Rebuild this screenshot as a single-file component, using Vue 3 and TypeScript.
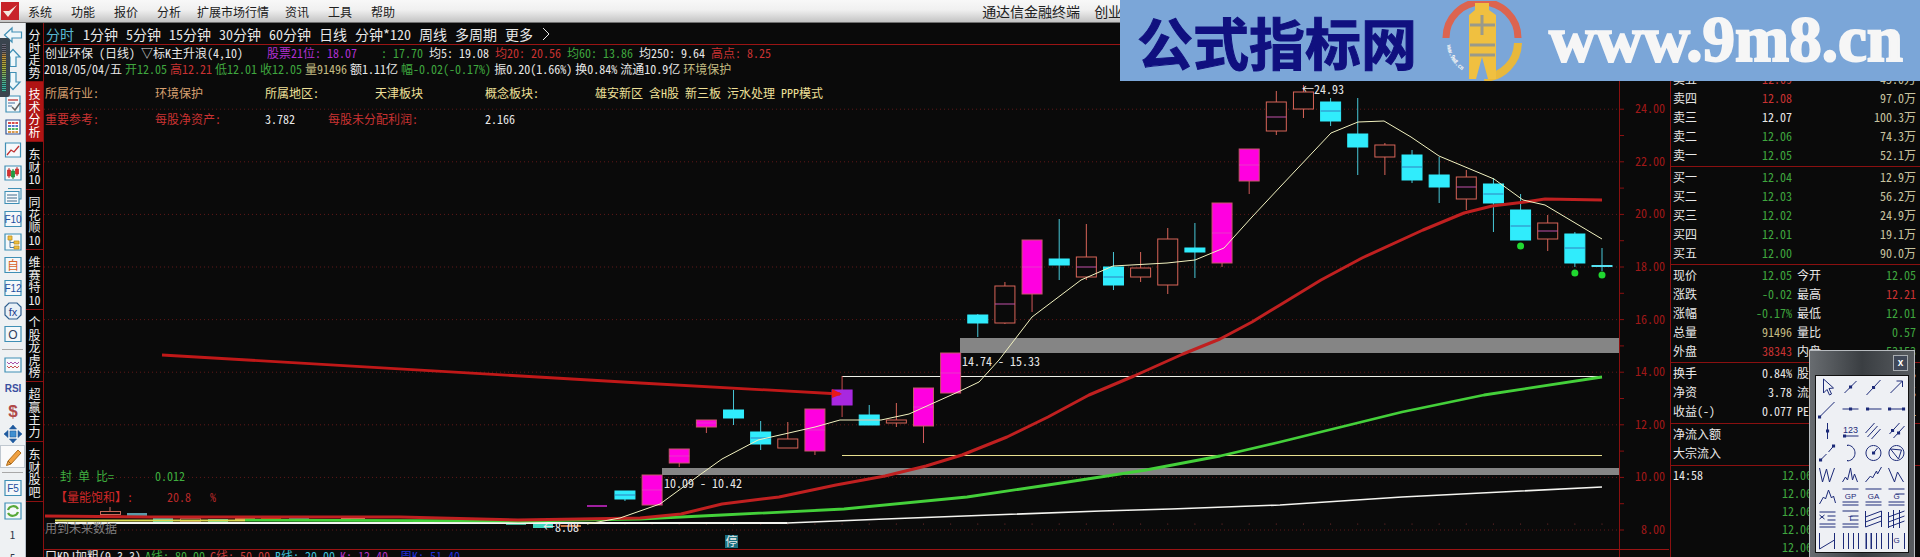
<script setup lang="ts">
interface Part {
  d: string;
  stroke?: string;
  fill?: string;
  w?: number;
}
interface Icon {
  parts: Part[];
  label?: string;
  color?: string;
  size?: number;
  bold?: boolean;
  sep?: boolean;
  active?: boolean;
  plain?: string;
}
interface Candle {
  k: number;
  kind: "up" | "down" | "lim" | "buy";
  top: number;
  bottom: number;
  high: number;
  low: number;
  mid?: number;
}

const menus = ["系统", "功能", "报价", "分析", "扩展市场行情", "资讯", "工具", "帮助"];
const periods = ["1分钟", "5分钟", "15分钟", "30分钟", "60分钟", "日线", "分钟*120", "周线", "多周期", "更多"];

const tabs = [
  { text: "分时走势", h: 59 },
  { text: "技术分析", h: 60, on: true },
  { text: "东财10", h: 48 },
  { text: "同花顺10", h: 60 },
  { text: "维赛特10", h: 60 },
  { text: "个股龙虎榜", h: 72 },
  { text: "超赢主力", h: 60 },
  { text: "东财股吧", h: 60 },
];

const blue = "#3f8fb5";
const boxed = (label: string, color = "#1f4f9f", size = 10): Icon => ({
  parts: [{ d: "M2 2.5H18V17.5H2Z", stroke: blue, fill: "#f4f8fa", w: 1.2 }],
  label,
  color,
  size,
});

const leftIcons: Icon[] = [
  { parts: [{ d: "M1.5 10 9 3V7H18.5V13H9V17Z", stroke: blue, fill: "#eef7fa", w: 1.2 }] },
  { parts: [{ d: "M10 1.5 17 9H13V18.5H7V9H3Z", stroke: blue, fill: "#eef7fa", w: 1.2 }] },
  { parts: [{ d: "M10 18.5 17 11H13V1.5H7V11H3Z", stroke: blue, fill: "#eef7fa", w: 1.2 }] },
  {
    parts: [
      { d: "M3 2H17V18H3Z", stroke: blue, fill: "#f4f8fa", w: 1.2 },
      { d: "M5 6H15", stroke: "#c04040", w: 1.4 },
      { d: "M5 9H12M5 12H9", stroke: "#3f6f9f", w: 1 },
      { d: "M9 13 12 16 17 9", stroke: "#606060", w: 1.5 },
    ],
  },
  {
    parts: [
      { d: "M3 3H17V17H3Z", stroke: "#30508f", fill: "#fff", w: 1.2 },
      { d: "M5 6H15", stroke: "#d02020", w: 1.6 },
      { d: "M5 9H15", stroke: "#2a50c0", w: 1.6 },
      { d: "M5 12H15", stroke: "#20a040", w: 1.6 },
      { d: "M5 15H15", stroke: "#d08020", w: 1.6 },
      { d: "M8.5 4V16M12 4V16", stroke: "#fff", w: 0.8 },
    ],
  },
  {
    parts: [
      { d: "M2.5 3H17.5V17H2.5Z", stroke: blue, fill: "#f6f9fb", w: 1.2 },
      { d: "M4 15 8 10 11 12 16 6", stroke: "#c03030", w: 1.3 },
    ],
  },
  {
    parts: [
      { d: "M2 3H18V17H2Z", stroke: blue, fill: "#f6f9fb", w: 1.2 },
      { d: "M6 5V15M14 4V13", stroke: "#c03030", w: 1 },
      { d: "M10 6V16", stroke: "#208a3a", w: 1 },
      { d: "M4.5 7H7.5V13H4.5ZM12.5 6H15.5V11H12.5Z", stroke: "#c03030", fill: "#d83030", w: 0.8 },
      { d: "M8.5 8H11.5V14H8.5Z", stroke: "#208a3a", fill: "#20a040", w: 0.8 },
    ],
  },
  {
    parts: [
      { d: "M5 2.5H18V13H16", stroke: blue, w: 1.1 },
      { d: "M2 5.5H16V17.5H2Z", stroke: blue, fill: "#f6f9fb", w: 1.1 },
      { d: "M4 9H14M4 12H14M4 15H14", stroke: "#406a8a", w: 1 },
    ],
  },
  boxed("F10"),
  {
    parts: [
      { d: "M2 2H18V18H2Z", stroke: blue, fill: "#f4f8fa", w: 1.2 },
      { d: "M5 4H9V8H5ZM11 9H16V12H11ZM11 14H16V17H11Z", stroke: "#c09020", fill: "#f0c040", w: 0.8 },
      { d: "M7 8V15.5H11M7 10.5H11", stroke: "#4070a0", w: 0.9 },
    ],
  },
  boxed("自", "#d8642a", 12),
  boxed("F12"),
  {
    parts: [{ d: "M6 2H14L18 6V14L14 18H6L2 14V6Z", stroke: "#2f5f8f", fill: "#e8f0f6", w: 1.2 }],
    label: "fx",
    color: "#1f3f8f",
    size: 11,
  },
  boxed("O", "#304060", 12),
  { parts: [], sep: true },
  {
    parts: [
      { d: "M2 3H18V17H2Z", stroke: blue, fill: "#f6f9fb", w: 1.2 },
      { d: "M4 7 6 9 8 7 10 9 12 7 14 9 16 7", stroke: "#a03fa0", w: 0.9 },
      { d: "M4 11 6 13 8 11 10 13 12 11 14 13 16 11", stroke: "#c04040", w: 0.9 },
    ],
  },
  { parts: [], label: "RSI", color: "#3a4f9f", size: 10, bold: true },
  { parts: [], label: "$", color: "#b04a4a", size: 17, bold: true },
  {
    parts: [
      { d: "M10 1 13.5 5H6.500ZM10 19 13.500 15H6.500ZM1 10 5 6.500V13.500ZM19 10 15 6.500V13.500Z", stroke: "#1f5a9f", fill: "#1f5a9f", w: 0.6 },
      { d: "M7 7H13V13H7Z", stroke: "#1f5a9f", fill: "#3f8fd0", w: 0.6 },
    ],
  },
  {
    active: true,
    parts: [
      { d: "M5 14 15 3 18 6 8 17 3.500 18.500Z", stroke: "#b07020", fill: "#f0a040", w: 1 },
      { d: "M5 14 8 17", stroke: "#906020", w: 1 },
    ],
  },
  { parts: [], sep: true },
  boxed("F5"),
  {
    parts: [
      { d: "M2 2H18V18H2Z", stroke: blue, fill: "#f4f8fa", w: 1.2 },
      { d: "M5 9A5.500 5.500 0 0 1 15 8M15 11A5.500 5.500 0 0 1 5 12", stroke: "#58a838", w: 2.2 },
    ],
  },
  { parts: [], plain: "1" },
  { parts: [], plain: "5" },
];

const ink = "#1c2a78";
const tool = (d: string, dots = "", label = "", size = 8): { d: string; dots: string; label: string; size: number } => ({ d, dots, label, size });
const tools = [
  tool("M7 3V17L10.500 13.500 13 19 15 18 12.500 12.500 17 12Z"),
  tool("M5 17 17 5", "M11 11h.1"),
  tool("M4 19 18 4", "M11 11.500h.1"),
  tool("M5 17 17 5M11 5H17V11"),
  tool("M3 19 18 4", "M3 19h.1"),
  tool("M3 11H19", "M11 11h.1"),
  tool("M4 11H19", "M5 11h.1"),
  tool("M3 11H19", "M4 11h.1M18 11h.1"),
  tool("M11 3V19", "M11 11h.1"),
  tool("M4 16H19", "M5 16h.1", "123", 9),
  tool("M3 13 12 3M5 17 15 6M9 19 18 9"),
  tool("M4 14 14 3M8 18 19 6", "M7 10.500h.1M13 13h.1"),
  tool("M3 19 10 12M12 10 18 3", "M4 18h.1M17 4h.1"),
  tool("M8 3C18 4 18 18 8 19M8 3V4M8 18V19"),
  tool("M11 3.500A7.500 7.500 0 1 1 10.900 3.500M11 11 15 6", "M11 11h.1"),
  tool("M11 3.500A7.500 7.500 0 1 1 10.900 3.500M5 7 16 8 13 17 5 7"),
  tool("M3 4 6 18 10 5 13 18 18 4"),
  tool("M3 18 6 13 8 16 11 4 13 16 15 10 18 18"),
  tool("M3 18 8 12 10 14 14 7 15 10 19 3"),
  tool("M3 4 9 18 12 8 18 18"),
  tool("M3 18 7 11 9 13 12 4 15 12 17 10 19 17"),
  tool("M3 3H19M3 16H19M3 19H19", "", "GP"),
  tool("M3 3H19M3 16H19M3 19H19", "", "GA"),
  tool("M3 3H19M3 16H19M3 19H19M10 8H19", "", "G"),
  tool("M3 4H19M11 8H19M11 12H19M3 16H19M3 19H19M3 7 8 11M8 7 3 11"),
  tool("M3 3H19M11 8H19M11 12H19M3 16H19M3 19H19", "", "T"),
  tool("M3 3V19M19 3V19M3 9 19 3M3 14 19 8M3 19 19 13"),
  tool("M3 4V20M8 2V20M14 2V20M3 9 19 3M3 14 19 8M3 19 19 13"),
  tool("M3 3V19M18 3V19M3 19 18 10"),
  tool("M4 3V19M9 3V19M14 3V19M19 3V19"),
  tool("M3.500 3V19M8.500 3V19M14 3V19M19 3V19M4 3V19M9 3V19"),
  tool("M3 3V19M7 3V19M19 3V19", "", "G"),
];

const line1 = [
  { t: "创业环保 (日线) ▽标K主升浪(4,10)    ", c: "white" },
  { t: "股票21位: 18.07", c: "purple" },
  { t: "    : 17.70 ", c: "green" },
  { t: "均5: 19.08 ", c: "white" },
  { t: "均20: 20.56 ", c: "red" },
  { t: "均60: 13.86 ", c: "green" },
  { t: "均250: 9.64 ", c: "white" },
  { t: "高点: 8.25", c: "red" },
];
const line2 = [
  { t: "2018/05/04/五", c: "white" },
  { t: "开12.05", c: "green" },
  { t: "高12.21", c: "red" },
  { t: "低12.01", c: "green" },
  { t: "收12.05", c: "green" },
  { t: "量91496", c: "khaki" },
  { t: "额1.11亿", c: "white" },
  { t: "幅-0.02(-0.17%)", c: "green" },
  { t: "振0.20(1.66%)", c: "white" },
  { t: "换0.84%", c: "white" },
  { t: "流通10.9亿", c: "white" },
  { t: "环境保护", c: "khaki" },
];

const candleX = (k: number) => 1602 - k * 27.14;
const candles: Candle[] = [
  { k: 0, kind: "down", top: 265.5, bottom: 266.5, high: 248, low: 271 },
  { k: 1, kind: "down", top: 234, bottom: 263, high: 232, low: 267, mid: 248 },
  { k: 2, kind: "up", top: 223, bottom: 239, high: 215, low: 251, mid: 231 },
  { k: 3, kind: "down", top: 210, bottom: 240, high: 194, low: 240, mid: 226 },
  { k: 4, kind: "down", top: 184, bottom: 203, high: 178, low: 232, mid: 194 },
  { k: 5, kind: "up", top: 177, bottom: 199, high: 170, low: 210, mid: 187 },
  { k: 6, kind: "down", top: 175, bottom: 187, high: 157, low: 203 },
  { k: 7, kind: "down", top: 155, bottom: 180, high: 150, low: 183, mid: 167 },
  { k: 8, kind: "up", top: 145, bottom: 157, high: 143, low: 175 },
  { k: 9, kind: "down", top: 134, bottom: 147, high: 98, low: 175 },
  { k: 10, kind: "down", top: 102, bottom: 121, high: 98, low: 126, mid: 111 },
  { k: 11, kind: "up", top: 92, bottom: 109, high: 85, low: 118 },
  { k: 12, kind: "up", top: 102, bottom: 131, high: 91, low: 135, mid: 117 },
  { k: 13, kind: "lim", top: 149, bottom: 181, high: 149, low: 194, mid: 165 },
  { k: 14, kind: "lim", top: 203, bottom: 263, high: 203, low: 267, mid: 233 },
  { k: 15, kind: "down", top: 248, bottom: 252, high: 223, low: 278 },
  { k: 16, kind: "up", top: 239, bottom: 285, high: 228, low: 294 },
  { k: 17, kind: "up", top: 268, bottom: 277, high: 252, low: 282 },
  { k: 18, kind: "down", top: 267, bottom: 285, high: 252, low: 290, mid: 277 },
  { k: 19, kind: "up", top: 257, bottom: 277, high: 224, low: 280, mid: 267 },
  { k: 20, kind: "down", top: 259, bottom: 265, high: 219, low: 280 },
  { k: 21, kind: "lim", top: 240, bottom: 294, high: 240, low: 312, mid: 267 },
  { k: 22, kind: "up", top: 286, bottom: 323, high: 282, low: 324, mid: 304 },
  { k: 23, kind: "down", top: 315, bottom: 323, high: 314, low: 337 },
  { k: 24, kind: "lim", top: 353, bottom: 393, high: 353, low: 393, mid: 373 },
  { k: 25, kind: "lim", top: 388, bottom: 426, high: 388, low: 443, mid: 407 },
  { k: 26, kind: "up", top: 420, bottom: 423, high: 403, low: 427 },
  { k: 27, kind: "down", top: 415, bottom: 425, high: 405, low: 425, mid: 420 },
  { k: 28, kind: "buy", top: 390, bottom: 405, high: 376, low: 417 },
  { k: 29, kind: "lim", top: 409, bottom: 451, high: 409, low: 455, mid: 430 },
  { k: 30, kind: "up", top: 439, bottom: 448, high: 422, low: 448 },
  { k: 31, kind: "down", top: 432, bottom: 444, high: 421, low: 450, mid: 438 },
  { k: 32, kind: "down", top: 410, bottom: 418, high: 390, low: 425 },
  { k: 33, kind: "lim", top: 420, bottom: 427, high: 420, low: 433, mid: 423 },
  { k: 34, kind: "lim", top: 449, bottom: 463, high: 449, low: 467, mid: 456 },
  { k: 35, kind: "lim", top: 475, bottom: 505, high: 475, low: 505, mid: 490 },
  { k: 36, kind: "down", top: 491, bottom: 499, high: 491, low: 501, mid: 495 },
];

const bodyFill = { up: "#0a0a0a", down: "#30ecfc", lim: "#ff00e0", buy: "#a828e0" };
const edge = { up: "#d86458", down: "#30ecfc", lim: "#c8586a", buy: "#a828e0" };
const wick = { up: "#d86458", down: "#48c8d8", lim: "#d0585a", buy: "#c84a4a" };
const midColor = { up: "#c050a8", down: "#3080c0", lim: "#e838c8", buy: "#a828e0" };

// small bars squeezed at the bottom of the price range
const miniBars = [
  { x: 55, y: 515, w: 10, h: 2, c: "#e8d840" },
  { x: 127, y: 513, w: 20, h: 3, c: "#5a9aa8" },
  { x: 153, y: 517, w: 20, h: 5, c: "#30d0c0" },
  { x: 208, y: 519, w: 20, h: 3, c: "#40c8a0" },
  { x: 235, y: 518, w: 20, h: 2, c: "#c89050" },
  { x: 261, y: 517, w: 20, h: 3, c: "#e05010" },
  { x: 289, y: 517, w: 20, h: 3, c: "#40c0a0" },
  { x: 341, y: 518, w: 24, h: 1, c: "#e0c090" },
  { x: 506, y: 522, w: 20, h: 3, c: "#40b090" },
  { x: 533, y: 524, w: 20, h: 4, c: "#40d8c0" },
  { x: 561, y: 525, w: 20, h: 2, c: "#c87840" },
  { x: 587, y: 505, w: 20, h: 2, c: "#a020a0" },
];

const pts = (list: number[][]) => list.map((p) => p.join(",")).join(" ");
const ma5 = pts([[587, 524], [620, 518], [640, 511], [660, 504], [701, 474], [722, 459], [758, 440], [815, 427], [840, 420], [881, 420], [909, 414], [958, 392], [979, 382], [999, 360], [1032, 317], [1081, 280], [1113, 266], [1167, 263], [1195, 260], [1224, 248], [1252, 217], [1280, 187], [1331, 133], [1358, 122], [1384, 121], [1411, 137], [1439, 156], [1494, 179], [1523, 200], [1545, 205], [1602, 239]]);
const ma20 = pts([[45, 516], [150, 517], [400, 517], [518, 520], [640, 518], [681, 514], [722, 504], [779, 497], [836, 485], [885, 476], [926, 466], [962, 455], [1007, 437], [1048, 417], [1089, 395], [1134, 376], [1183, 354], [1220, 339], [1252, 322], [1280, 305], [1321, 280], [1362, 258], [1423, 230], [1464, 213], [1492, 206], [1525, 202], [1545, 199], [1602, 200]]);
const ma60 = pts([[245, 520], [518, 521], [640, 519], [722, 515], [844, 509], [967, 497], [1048, 485], [1146, 470], [1220, 456], [1280, 442], [1402, 412], [1484, 395], [1602, 377]]);
const ma250 = pts([[787, 523], [885, 519], [991, 515], [1101, 511], [1171, 509], [1280, 505], [1402, 497], [1602, 487]]);
const trend = pts([[162, 355], [640, 383], [840, 394]]);

const priceY = (p: number) => 530 - (p - 8) * 26.3;
const axisLabels = [24, 22, 20, 18, 16, 14, 12, 10, 8];
const axisTicks = Array.from({ length: 17 }, (_, i) => 8 + i);
const bottomDots = Array.from({ length: 37 }, (_, i) => candleX(i));
const signals = [
  { x: candleX(0), y: 275 },
  { x: candleX(1), y: 273 },
  { x: candleX(3), y: 246 },
];

const kdj = [
  { t: "A线:", v: "80.00", x: 145, c: "#3fae3f" },
  { t: "C线:", v: "50.00", x: 210, c: "#c83a3a" },
  { t: "B线:", v: "20.00", x: 275, c: "#3fc0d8" },
  { t: "K:", v: "12.40", x: 340, c: "#b030c0" },
  { t: "周K:", v: "51.40", x: 400, c: "#2030d8" },
];

const quotes = [
  { l: "卖五", p: "12.09", c: "red", v: "45.0万" },
  { l: "卖四", p: "12.08", c: "red", v: "97.0万" },
  { l: "卖三", p: "12.07", c: "white", v: "100.3万" },
  { l: "卖二", p: "12.06", c: "green", v: "74.3万" },
  { l: "卖一", p: "12.05", c: "green", v: "52.1万" },
];
const bids = [
  { l: "买一", p: "12.04", c: "green", v: "12.9万" },
  { l: "买二", p: "12.03", c: "green", v: "56.2万" },
  { l: "买三", p: "12.02", c: "green", v: "24.9万" },
  { l: "买四", p: "12.01", c: "green", v: "19.1万" },
  { l: "买五", p: "12.00", c: "green", v: "90.0万" },
];
const stats = [
  { l: "现价", v: "12.05", c: "green", l2: "今开", v2: "12.05", c2: "green" },
  { l: "涨跌", v: "-0.02", c: "green", l2: "最高", v2: "12.21", c2: "red" },
  { l: "涨幅", v: "-0.17%", c: "green", l2: "最低", v2: "12.01", c2: "green" },
  { l: "总量", v: "91496", c: "khaki", l2: "量比", v2: "0.57", c2: "green" },
  { l: "外盘", v: "38343", c: "red", l2: "内盘", v2: "53153", c2: "green" },
];
const stats2 = [
  { l: "换手", v: "0.84%", c: "white", l2: "股本", v2: "1.29亿", c2: "white" },
  { l: "净资", v: "3.78", c: "white", l2: "流通", v2: "0.90亿", c2: "white" },
  { l: "收益(-)", v: "0.077", c: "white", l2: "PE", v2: "39.1", c2: "white" },
];
const ticks = ["12.06", "12.06", "12.06", "12.06", "12.06"];
</script>

<template>
  <div class="page">
    <header class="titlebar">
      <svg class="logo" viewBox="0 0 18 18" width="18" height="18">
        <rect width="18" height="18" fill="#c8242a" />
        <path d="M2 9 7 15 16 3 8 9Z" fill="#f4e8e0" />
      </svg>
      <span v-for="m in menus" :key="m" class="menu" :class="{ wide: m.length > 2 }">{{ m }}</span>
      <span class="apptitle">通达信金融终端</span>
      <span class="apptitle second">创业环保</span>
    </header>

    <div class="workspace">
      <aside class="toolbar">
        <template v-for="(icon, i) in leftIcons" :key="i">
          <div v-if="icon.sep" class="tool-sep"></div>
          <div v-else-if="icon.plain" class="tool plain">{{ icon.plain }}</div>
          <div v-else class="tool" :class="{ active: icon.active }">
            <svg viewBox="0 0 20 20" width="20" height="20">
              <path v-for="(p, j) in icon.parts" :key="j" :d="p.d" :stroke="p.stroke" :fill="p.fill || 'none'" :stroke-width="p.w || 1" />
              <text
                v-if="icon.label"
                x="10"
                y="10.500"
                class="icon-label"
                :class="{ bold: icon.bold }"
                :fill="icon.color"
                :font-size="icon.size"
              >{{ icon.label }}</text>
            </svg>
          </div>
        </template>
      </aside>

      <nav class="tabs">
        <div
          v-for="tab in tabs"
          :key="tab.text"
          class="tab"
          :class="{ on: tab.on }"
          :style="{ height: tab.h + 'px' }"
        >
          <span>{{ tab.text }}</span>
        </div>
      </nav>

      <main class="main">
        <div class="periods">
          <span class="period current">分时</span>
          <span v-for="p in periods" :key="p" class="period">{{ p }}</span>
          <svg class="chev" viewBox="0 0 8 14" width="8" height="14">
            <path d="M1 1 7 7 1 13" fill="none" stroke="#e8e8e8" />
          </svg>
        </div>

        <div class="content">
          <div class="chart">
            <svg class="plot" viewBox="44 45 1626 512" width="1626" height="512">
              <line
                v-for="p in axisLabels"
                :key="'g' + p"
                x1="44"
                x2="1619"
                :y1="priceY(p)"
                :y2="priceY(p)"
                stroke="#601818"
                stroke-dasharray="1 3"
              />
              <circle v-for="x in bottomDots" :key="'d' + x" :cx="x" cy="524" r="0.6" fill="#803030" />

              <rect x="960" y="338" width="659" height="15" fill="#858585" />
              <rect x="662" y="468" width="957" height="7" fill="#858585" />
              <line x1="842" x2="1602" y1="376.500" y2="376.500" stroke="#f0f0e8" />
              <line x1="842" x2="1602" y1="455.500" y2="455.500" stroke="#e8e090" />

              <rect v-for="b in miniBars" :key="b.x" :x="b.x" :y="b.y" :width="b.w" :height="b.h" :fill="b.c" />
              <rect x="100.500" y="511.500" width="20" height="3" fill="none" stroke="#c86a5a" />
              <line x1="110" x2="110" y1="507" y2="511" stroke="#c86a5a" />
              <rect x="180.500" y="518.500" width="20" height="3" fill="none" stroke="#a06a5a" />

              <g v-for="c in candles" :key="c.k">
                <line :x1="candleX(c.k)" :x2="candleX(c.k)" :y1="c.high" :y2="c.low" :stroke="wick[c.kind]" />
                <rect
                  :x="candleX(c.k) - 10"
                  :y="c.top"
                  width="20"
                  :height="c.bottom - c.top"
                  :fill="bodyFill[c.kind]"
                  :stroke="edge[c.kind]"
                />
                <line
                  v-if="c.mid"
                  :x1="candleX(c.k) - 10"
                  :x2="candleX(c.k) + 10"
                  :y1="c.mid"
                  :y2="c.mid"
                  :stroke="midColor[c.kind]"
                />
              </g>
              <line x1="1592" x2="1612" y1="266" y2="266" stroke="#80d8e8" />

              <line x1="55" x2="787" y1="523" y2="523" stroke="#f4f4f0" stroke-width="2" />
              <polyline :points="ma250" class="curve" stroke="#f4f4f0" stroke-width="1.600" />
              <line x1="55" x2="245" y1="520.500" y2="520.500" stroke="#d8d850" stroke-width="2" />
              <polyline :points="ma60" class="curve" stroke="#44d03a" stroke-width="2.800" />
              <polyline :points="ma20" class="curve" stroke="#c02020" stroke-width="3" />
              <polyline :points="ma5" class="curve" stroke="#f2f2c0" stroke-width="1" />
              <polyline :points="trend" class="curve" stroke="#c01818" stroke-width="2.800" />
              <path d="M832 389 842 394 832 398Z" fill="#e81818" />

              <circle v-for="s in signals" :key="s.x" :cx="s.x" :cy="s.y" r="3.500" fill="#20d830" />

              <text x="962" y="366" class="mark">14.74 - 15.33</text>
              <text x="664" y="488" class="mark">10.09 - 10.42</text>
              <text x="1302" y="94" class="mark">←24.93</text>
              <text x="543" y="532" class="mark">←8.08</text>

              <text x="60" y="481" class="mark" style="fill: #3fae3f">封 单 比=</text>
              <text x="155" y="481" class="mark" style="fill: #3fae3f">0.012</text>
              <text x="55" y="502" class="mark" style="fill: #d02828">【量能饱和】:</text>
              <text x="167" y="502" class="mark" style="fill: #b82828">20.8</text>
              <text x="210" y="502" class="mark" style="fill: #b82828">%</text>
              <text x="45" y="533" class="mark" style="fill: #808080">用到未来数据</text>

              <rect x="725" y="535" width="13" height="13" fill="#1a7080" />
              <text x="725.500" y="546" class="mark">停</text>

              <line x1="1619.500" x2="1619.500" y1="45" y2="557" stroke="#8a1010" />
              <g v-for="p in axisTicks" :key="'t' + p">
                <line x1="1620" x2="1624" :y1="priceY(p)" :y2="priceY(p)" stroke="#8a1010" />
              </g>
              <text
                v-for="p in axisLabels"
                :key="'l' + p"
                x="1665"
                :y="priceY(p) + 4"
                class="axis-label"
              >{{ p }}.00</text>

              <line x1="44" x2="1669" y1="549.500" y2="549.500" stroke="#9a1414" />
              <text x="45" y="561" class="mark">口KDJ加粗(9,3,3)</text>
              <g v-for="k in kdj" :key="k.x">
                <text :x="k.x" y="561" class="mark" :style="{ fill: k.c }">{{ k.t }}</text>
                <text :x="k.t.length > 2 ? k.x + 30 : k.x + 18" y="561" class="mark" :style="{ fill: k.c }">{{ k.v }}</text>
              </g>
            </svg>

            <div class="readout">
              <div class="readline first">
                <span v-for="s in line1" :key="s.t" :class="s.c">{{ s.t }}</span>
              </div>
              <div class="readline spaced">
                <span v-for="s in line2" :key="s.t" :class="s.c">{{ s.t }}</span>
              </div>
              <div class="facts top">
                <span class="tan">所属行业:</span>
                <span class="tan">环境保护</span>
                <span class="sand">所属地区:</span>
                <span class="sand">天津板块</span>
                <span class="sand">概念板块:</span>
                <span class="sand">雄安新区 含H股 新三板 污水处理 PPP模式</span>
              </div>
              <div class="facts lower">
                <span class="red">重要参考:</span>
                <span class="red">每股净资产:</span>
                <span class="white">3.782</span>
                <span class="red shifted">每股未分配利润:</span>
                <span class="white">2.166</span>
              </div>
            </div>
          </div>

          <section class="quote">
            <div class="book sell">
              <div v-for="q in quotes" :key="q.l" class="qrow">
                <span class="qlabel">{{ q.l }}</span>
                <span class="qprice" :class="q.c">{{ q.p }}</span>
                <span class="qvol">{{ q.v }}</span>
              </div>
            </div>
            <div class="book buy">
              <div v-for="q in bids" :key="q.l" class="qrow">
                <span class="qlabel">{{ q.l }}</span>
                <span class="qprice" :class="q.c">{{ q.p }}</span>
                <span class="qvol">{{ q.v }}</span>
              </div>
            </div>
            <div class="book">
              <div v-for="s in stats" :key="s.l" class="qrow">
                <span class="qlabel">{{ s.l }}</span>
                <span class="qprice" :class="s.c">{{ s.v }}</span>
                <span class="qlabel second">{{ s.l2 }}</span>
                <span class="qend" :class="s.c2">{{ s.v2 }}</span>
              </div>
            </div>
            <div class="book loose">
              <div v-for="s in stats2" :key="s.l" class="qrow">
                <span class="qlabel">{{ s.l }}</span>
                <span class="qprice" :class="s.c">{{ s.v }}</span>
                <span class="qlabel second">{{ s.l2 }}</span>
                <span class="qend" :class="s.c2">{{ s.v2 }}</span>
              </div>
            </div>
            <div class="book loose flows">
              <div class="qrow"><span class="qlabel">净流入额</span></div>
              <div class="qrow"><span class="qlabel">大宗流入</span></div>
            </div>
            <div class="trades">
              <div v-for="(t, i) in ticks" :key="i" class="trow">
                <span class="ttime">{{ i === 0 ? "14:58" : "" }}</span>
                <span class="green">{{ t }}</span>
              </div>
            </div>
          </section>
        </div>
      </main>
    </div>

    <div class="banner">
      <span class="brand">公式指标网</span>
      <svg class="seal" viewBox="0 0 80 80" width="80" height="80">
        <defs>
          <path id="sealText" d="M5 44A35 35 0 0 0 33 75" />
        </defs>
        <path d="M4 37A36 36 0 0 1 76 37" fill="none" stroke="#dc6450" stroke-width="7" />
        <path d="M76 42A36 36 0 0 1 42 77" fill="none" stroke="#e8b83c" stroke-width="8" />
        <path d="M33 2H47V9L54 14V60L54 78H27L27 60V14L33 9Z" fill="#f0c040" />
        <path d="M28 24H53M28 44H53M28 54H53M40 14V34" stroke="#9a9a8a" stroke-width="3" fill="none" />
        <path d="M40 56 34 78H46Z" fill="#7ba6d8" />
        <text class="seal-text"><textPath href="#sealText">www.9m8.cn</textPath></text>
      </svg>
      <span class="site">www.9m8.cn</span>
    </div>

    <div class="dock">
      <div class="dock-bars"></div>
    </div>

    <div class="drawbox">
      <div class="drawbox-head"><span class="close">x</span></div>
      <div class="drawbox-grid">
        <svg v-for="(t, i) in tools" :key="i" viewBox="0 0 22 22" width="23" height="22">
          <path :d="t.d" fill="none" :stroke="ink" stroke-width="1" />
          <path v-if="t.dots" :d="t.dots" fill="none" :stroke="ink" stroke-width="3" stroke-linecap="square" />
          <text v-if="t.label" x="11" y="10" class="tool-label" :font-size="t.size" :fill="ink">{{ t.label }}</text>
        </svg>
      </div>
    </div>
  </div>
</template>

<style>
html,
body {
  margin: 0;
  background: #0a0a0a;
}
</style>

<style scoped>
.page {
  position: relative;
  width: 1920px;
  height: 557px;
  overflow: hidden;
  display: flex;
  flex-direction: column;
  background: #0a0a0a;
  color: #e8e8e8;
  font-family: "Noto Sans CJK SC", "Liberation Sans", sans-serif;
  font-feature-settings: "hwid" 1;
  font-size: 12px;
}

.titlebar {
  flex: none;
  height: 23px;
  display: flex;
  align-items: center;
  box-sizing: border-box;
  border-bottom: 1px solid #707070;
  background: linear-gradient(#f8f8f8, #f0f0f0 45%, #c4c4c4);
  color: #202020;
}
.logo {
  margin: 0 9px 0 1px;
}
.menu {
  margin-right: 19px;
}
.menu.wide {
  margin-left: -3px;
  margin-right: 16px;
}
.apptitle {
  margin-left: 568px;
  font-size: 14px;
}
.apptitle.second {
  margin-left: 14px;
}

.workspace {
  flex: 1;
  min-height: 0;
  display: flex;
}

.toolbar {
  flex: none;
  width: 25px;
  background: #eef1f3;
  border-right: 1px solid #b8c0c8;
}
.tool {
  height: 23px;
  display: flex;
  align-items: center;
  justify-content: center;
}
.tool.active {
  background: #fafafa;
  box-shadow: inset 0 0 0 1px #c0c8d0;
}
.tool.plain {
  font-size: 11px;
  color: #303848;
}
.tool-sep {
  height: 8px;
  margin: 0 2px;
  box-sizing: border-box;
  border-bottom: 1px solid #a8a8a8;
  transform: translateY(-3px);
}
.icon-label {
  text-anchor: middle;
  dominant-baseline: central;
  font-family: "Liberation Sans", "Noto Sans CJK SC", sans-serif;
}
.icon-label.bold {
  font-weight: 700;
}

.tabs {
  flex: none;
  width: 17px;
  background: #050505;
  border-right: 1px solid #8a1010;
}
.tab {
  display: flex;
  justify-content: center;
  box-sizing: border-box;
  padding-top: 6px;
  border-bottom: 1px solid #8a1010;
  color: #f0f0f0;
  font-size: 12px;
  line-height: 12.500px;
}
.tab span {
  width: 12px;
  word-break: break-all;
}
.tab.on {
  background: #b01414;
  color: #fff;
}

.main {
  flex: 1;
  min-width: 0;
  display: flex;
  flex-direction: column;
}

.periods {
  flex: none;
  height: 22px;
  box-sizing: border-box;
  border-bottom: 1px solid #9a1414;
  display: flex;
  align-items: center;
  gap: 8px;
  padding-left: 2px;
  font-size: 14px;
  color: #e8e8e8;
}
.period.current {
  color: #58b8d0;
  margin-right: 1px;
}
.chev {
  margin-left: 1px;
}

.content {
  flex: 1;
  min-height: 0;
  display: flex;
}

.chart {
  position: relative;
  flex: none;
  width: 1626px;
}
.plot {
  display: block;
}
.curve {
  fill: none;
  stroke-linejoin: round;
}
.mark {
  fill: #e8e8e8;
  font-size: 12px;
}
.axis-label {
  fill: #a01818;
  font-size: 12px;
  text-anchor: end;
}

.readout {
  position: absolute;
  left: 1px;
  top: 0;
  line-height: 15px;
}
.readline {
  white-space: pre;
  display: flex;
}
.readline.spaced {
  gap: 3px;
  margin-top: 1px;
  margin-left: -1px;
}
.facts {
  display: grid;
  grid-template-columns: repeat(6, 110px);
  white-space: nowrap;
}
.facts.top {
  margin-top: 9px;
}
.facts.lower {
  margin-top: 11px;
}
.shifted {
  margin-left: -47px;
}

.white {
  color: #e8e8e8;
}
.red {
  color: #c83232;
}
.green {
  color: #3fa63f;
}
.khaki {
  color: #c4bc82;
}
.purple {
  color: #b030d0;
}
.tan {
  color: #d8a070;
}
.sand {
  color: #efe098;
}

.quote {
  flex: 1;
  min-width: 0;
  box-sizing: border-box;
  border-left: 1px solid #8a1010;
  padding-top: 24px;
  line-height: 19px;
}
.book {
  padding: 0 4px 2px 2px;
  border-bottom: 1px solid #8a1010;
}
.book.loose {
  padding-bottom: 3px;
}
.qrow {
  display: flex;
  height: 19px;
}
.qlabel {
  width: 60px;
  flex: none;
  white-space: nowrap;
}
.qlabel.second {
  width: auto;
  margin-left: 5px;
}
.qprice {
  width: 59px;
  flex: none;
  text-align: right;
}
.qvol,
.qend {
  flex: 1;
  text-align: right;
}
.qvol {
  color: #c8c4a0;
}
.trades {
  padding: 0 4px 0 2px;
  line-height: 18px;
}
.trow {
  display: flex;
  height: 18px;
}
.ttime {
  width: 109px;
  flex: none;
}

.banner {
  position: absolute;
  left: 1120px;
  top: 0;
  width: 800px;
  height: 81px;
  display: flex;
  align-items: center;
  background: #7ba6d8;
}
.brand {
  margin-left: 17px;
  font-size: 56px;
  line-height: 81px;
  font-weight: 700;
  color: #10107f;
  -webkit-text-stroke: 1px #10107f;
  white-space: nowrap;
}
.seal {
  margin-left: 25px;
  flex: none;
}
.seal-text {
  fill: #f4f4f4;
  font-size: 6px;
  font-weight: 700;
}
.site {
  margin-left: 27px;
  margin-top: -3px;
  font-family: "Liberation Serif", "DejaVu Serif", serif;
  font-feature-settings: normal;
  font-size: 65px;
  font-weight: 700;
  color: #f6f6f6;
  white-space: nowrap;
  -webkit-text-stroke: 2px #f6f6f6;
}

.dock {
  position: absolute;
  left: 0;
  top: 38px;
  width: 10px;
  height: 59px;
  background: #3a444e;
  border-radius: 0 3px 3px 0;
}
.dock-bars {
  margin: 6px 0 0 2px;
  width: 4px;
  height: 48px;
  background: repeating-linear-gradient(#0000 0 1px, #0008 1px 2px),
    linear-gradient(#667 0 15%, #c09040 25%, #a8b040 50%, #40b0a0 85%);
}

.drawbox {
  position: absolute;
  left: 1809px;
  top: 350px;
  width: 106px;
  height: 230px;
  box-sizing: border-box;
  border: 1px solid #b8bcc0;
  background: linear-gradient(90deg, #686c70, #3a3e42 50%, #585c60);
}
.drawbox-head {
  height: 24px;
  position: relative;
}
.close {
  position: absolute;
  right: 6px;
  top: 4px;
  width: 15px;
  height: 16px;
  box-sizing: border-box;
  border: 1px solid #a8acb0;
  background: #404858;
  color: #fff;
  font-family: "Liberation Sans", sans-serif;
  font-size: 10px;
  font-weight: 700;
  line-height: 13px;
  text-align: center;
}
.drawbox-grid {
  margin-left: 5px;
  width: 94px;
  box-sizing: border-box;
  border: 1px solid #101010;
  background: #eef0f4;
  display: grid;
  grid-template-columns: repeat(4, 23px);
  grid-auto-rows: 22px;
}
.drawbox-grid svg {
  display: block;
}
.tool-label {
  text-anchor: middle;
  dominant-baseline: central;
  font-family: "Liberation Sans", sans-serif;
}
</style>
